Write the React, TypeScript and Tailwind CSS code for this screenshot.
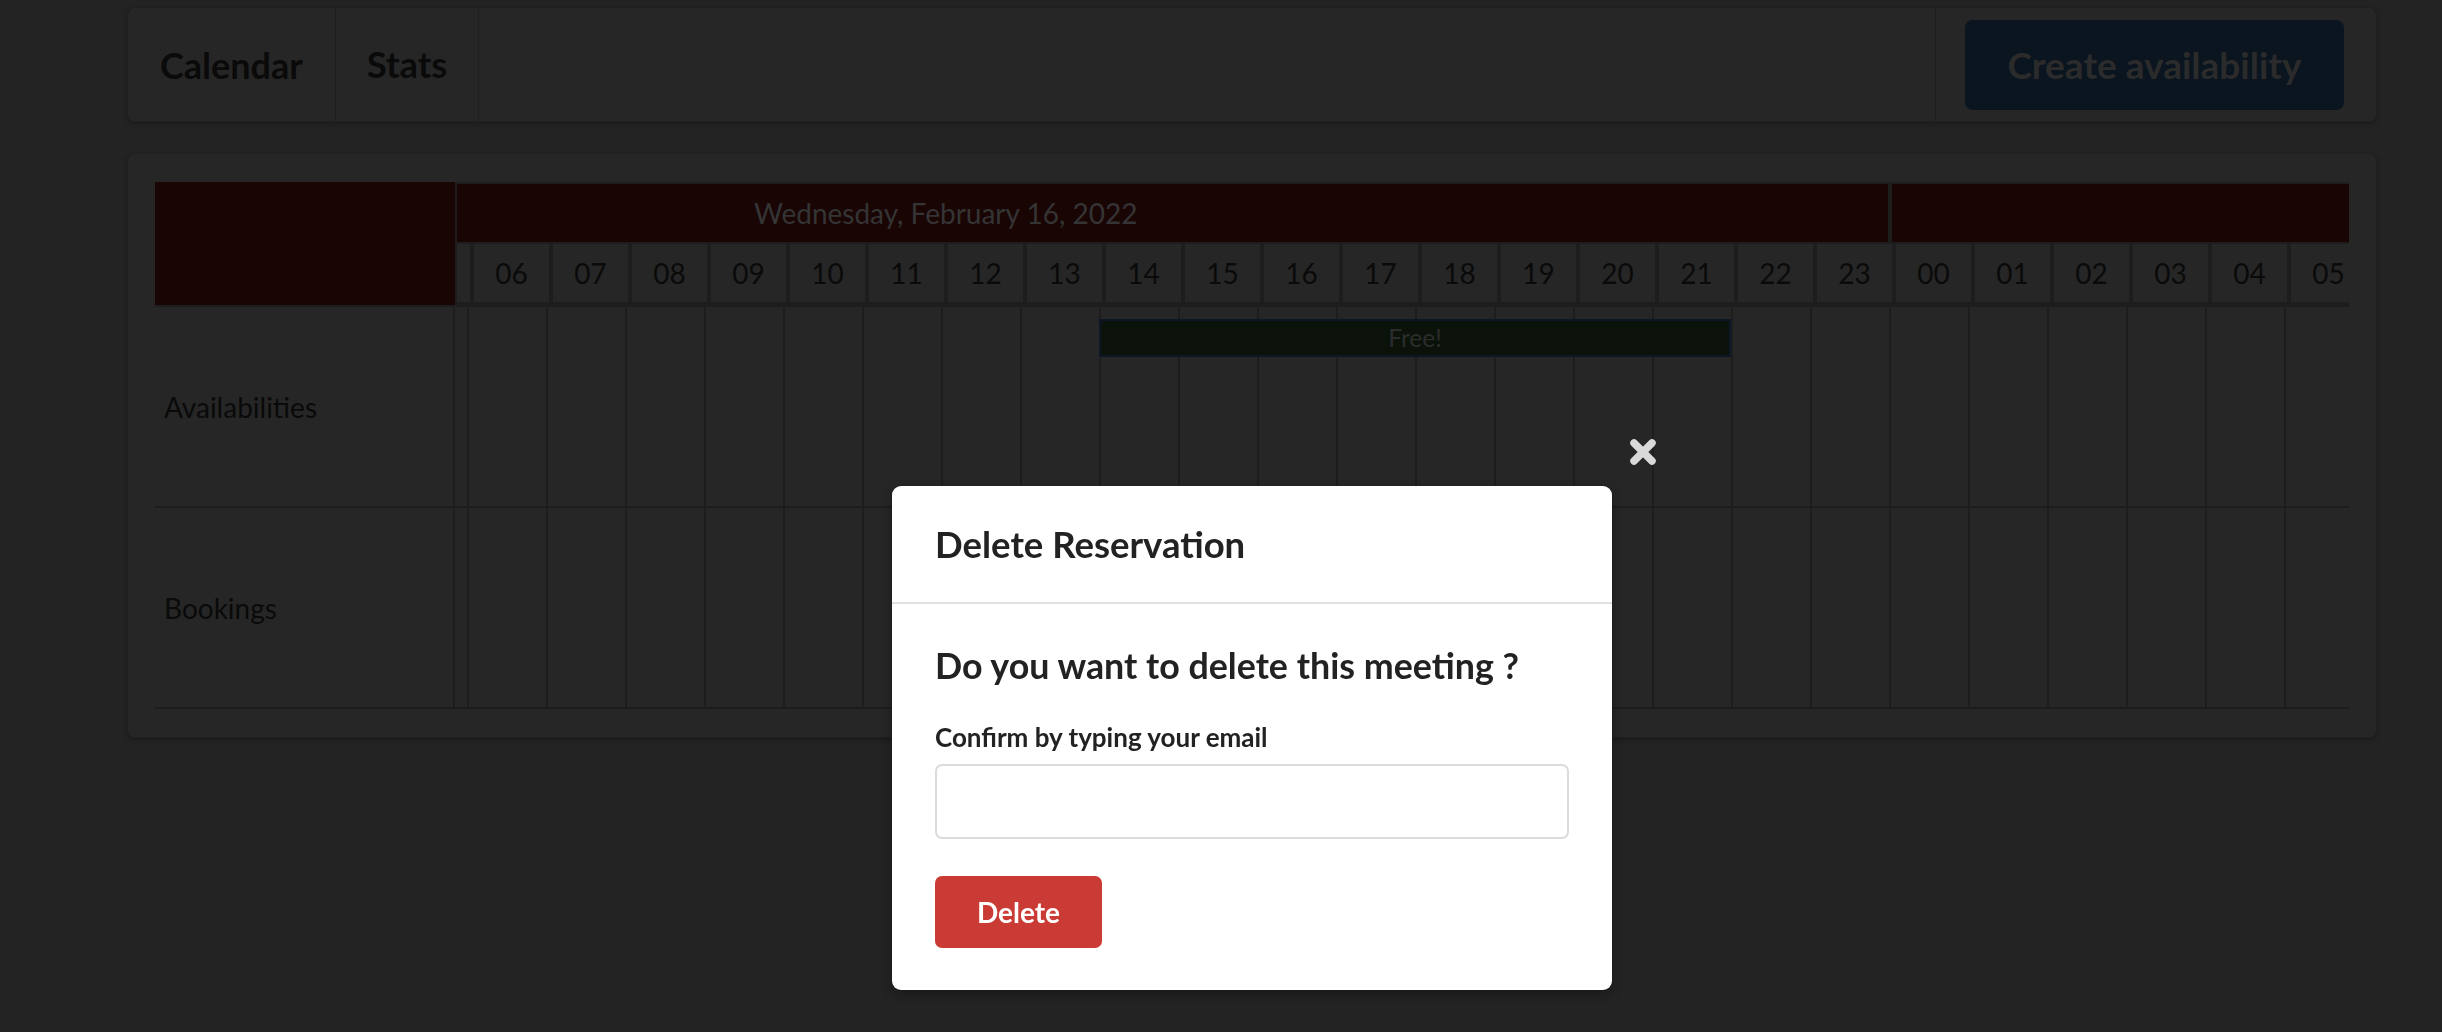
import React from "react";

const hours = [
  "06", "07", "08", "09", "10", "11", "12", "13", "14", "15", "16", "17",
  "18", "19", "20", "21", "22", "23", "00", "01", "02", "03", "04", "05",
];

const rows = [
  { label: "Availabilities", slots: [{ from: 8, to: 16, text: "Free!" }] },
  { label: "Bookings", slots: [] as { from: number; to: number; text: string }[] },
];

const COL = 79;
const OFFSET = 298 + 14;

function NavBar() {
  return (
    <div className="flex h-[115px] items-stretch rounded-[8px] border border-[#1f1f1f] bg-[#262626] shadow-[0_2px_4px_rgba(0,0,0,0.25)]">
      <div className="flex items-center border-r border-[#1f1f1f] px-[32px] text-[36px] font-bold text-[#0a0a0a]">
        Calendar
      </div>
      <div className="flex items-center border-r border-[#1f1f1f] px-[31px] text-[36.5px] font-bold text-[#0a0a0a]">
        Stats
      </div>
      <div className="flex-1" />
      <div className="flex items-center border-l border-[#1f1f1f] pl-[29px] pr-[32px]">
        <button className="h-[90px] w-[379px] rounded-[8px] bg-[#0a1520] text-[37px] font-bold text-[#2b2b2b]">
          Create availability
        </button>
      </div>
    </div>
  );
}

function Header() {
  return (
    <div className="flex h-[125px] gap-[2px] bg-[#1d1d1d]">
      <div className="h-[123px] w-[300px] shrink-0 bg-[#1a0505]" />
      <div className="flex flex-col gap-[2px] pt-[2px]">
        <div className="flex h-[58px] gap-[4px]">
          <div className="flex w-[1431px] shrink-0 items-center bg-[#1a0505] pl-[297px] text-[28px] text-[#343434]">
            Wednesday, February 16, 2022
          </div>
          <div className="w-[470px] shrink-0 bg-[#1a0505]" />
        </div>
        <div className="flex h-[58px] gap-[4px]">
          <div className="w-[13px] shrink-0 bg-[#262626]" />
          {hours.map((h) => (
            <div
              key={h}
              className="flex w-[75px] shrink-0 items-center justify-center bg-[#262626] text-[28px] text-[#0a0a0a]"
            >
              {h}
            </div>
          ))}
        </div>
      </div>
    </div>
  );
}

function Row({ label, slots }: (typeof rows)[number]) {
  return (
    <div className="relative flex h-[201px] border-b-2 border-[#1d1d1d]">
      <div className="flex w-[298px] shrink-0 items-center pl-[9px] text-[28px] text-[#0a0a0a]">
        {label}
      </div>
      <div className="w-[14px] shrink-0 border-l-2 border-[#1d1d1d]" />
      {hours.map((h) => (
        <div key={h} className="w-[79px] shrink-0 border-l-2 border-[#1d1d1d]" />
      ))}
      {slots.map((s) => (
        <div
          key={s.from}
          className="absolute top-[12px] flex h-[38px] items-center justify-center border-2 border-[#0d1626] bg-[#0a1209] text-[24.5px] text-[#2c2c2c]"
          style={{ left: OFFSET + s.from * COL, width: (s.to - s.from) * COL }}
        >
          {s.text}
        </div>
      ))}
    </div>
  );
}

function DeleteModal() {
  return (
    <div className="fixed inset-0">
      <button className="absolute left-[1628px] top-[437px] flex h-[30px] w-[30px] items-center justify-center">
        <svg width="28" height="26" viewBox="0 0 28 26">
          <path
            d="M5 4 L23 22 M23 4 L5 22"
            stroke="#d9d9d9"
            strokeWidth="7.5"
            strokeLinecap="round"
          />
        </svg>
      </button>
      <div className="absolute left-[892px] top-[486px] w-[720px] overflow-hidden rounded-[9px] bg-white shadow-[0_4px_12px_rgba(0,0,0,0.3)]">
        <div className="flex h-[118px] items-center border-b-2 border-[#e0e0e0] px-[43px] text-[36.5px] font-bold text-[#222]">
          Delete Reservation
        </div>
        <div className="px-[43px] pb-[42px] pt-[41px]">
          <h2 className="text-[35.8px] font-bold leading-[1.2] text-[#222]">
            Do you want to delete this meeting ?
          </h2>
          <label className="mt-[34px] block text-[26px] font-bold leading-[1.2] text-[#222]">
            Confirm by typing your email
          </label>
          <input
            type="email"
            className="mt-[11px] block h-[75px] w-full rounded-[7px] border-2 border-[#dbdbdb] px-[18px] text-[28px] outline-none"
          />
          <button className="mt-[37px] h-[72px] w-[167px] rounded-[7px] bg-[#cb3b35] text-[28px] font-bold text-white">
            Delete
          </button>
        </div>
      </div>
    </div>
  );
}

export default function App() {
  return (
    <div className="min-h-screen bg-[#232323] font-['Lato',sans-serif]">
      <div className="ml-[127px] w-[2250px] pt-[7px]">
        <NavBar />
        <div className="mt-[31px] rounded-[8px] border border-[#1f1f1f] bg-[#262626] px-[27px] pb-[28px] pt-[28px] shadow-[0_2px_4px_rgba(0,0,0,0.25)]">
          <div className="w-[2194px] overflow-hidden">
            <Header />
            {rows.map((r) => (
              <Row key={r.label} {...r} />
            ))}
          </div>
        </div>
      </div>
      <DeleteModal />
    </div>
  );
}
